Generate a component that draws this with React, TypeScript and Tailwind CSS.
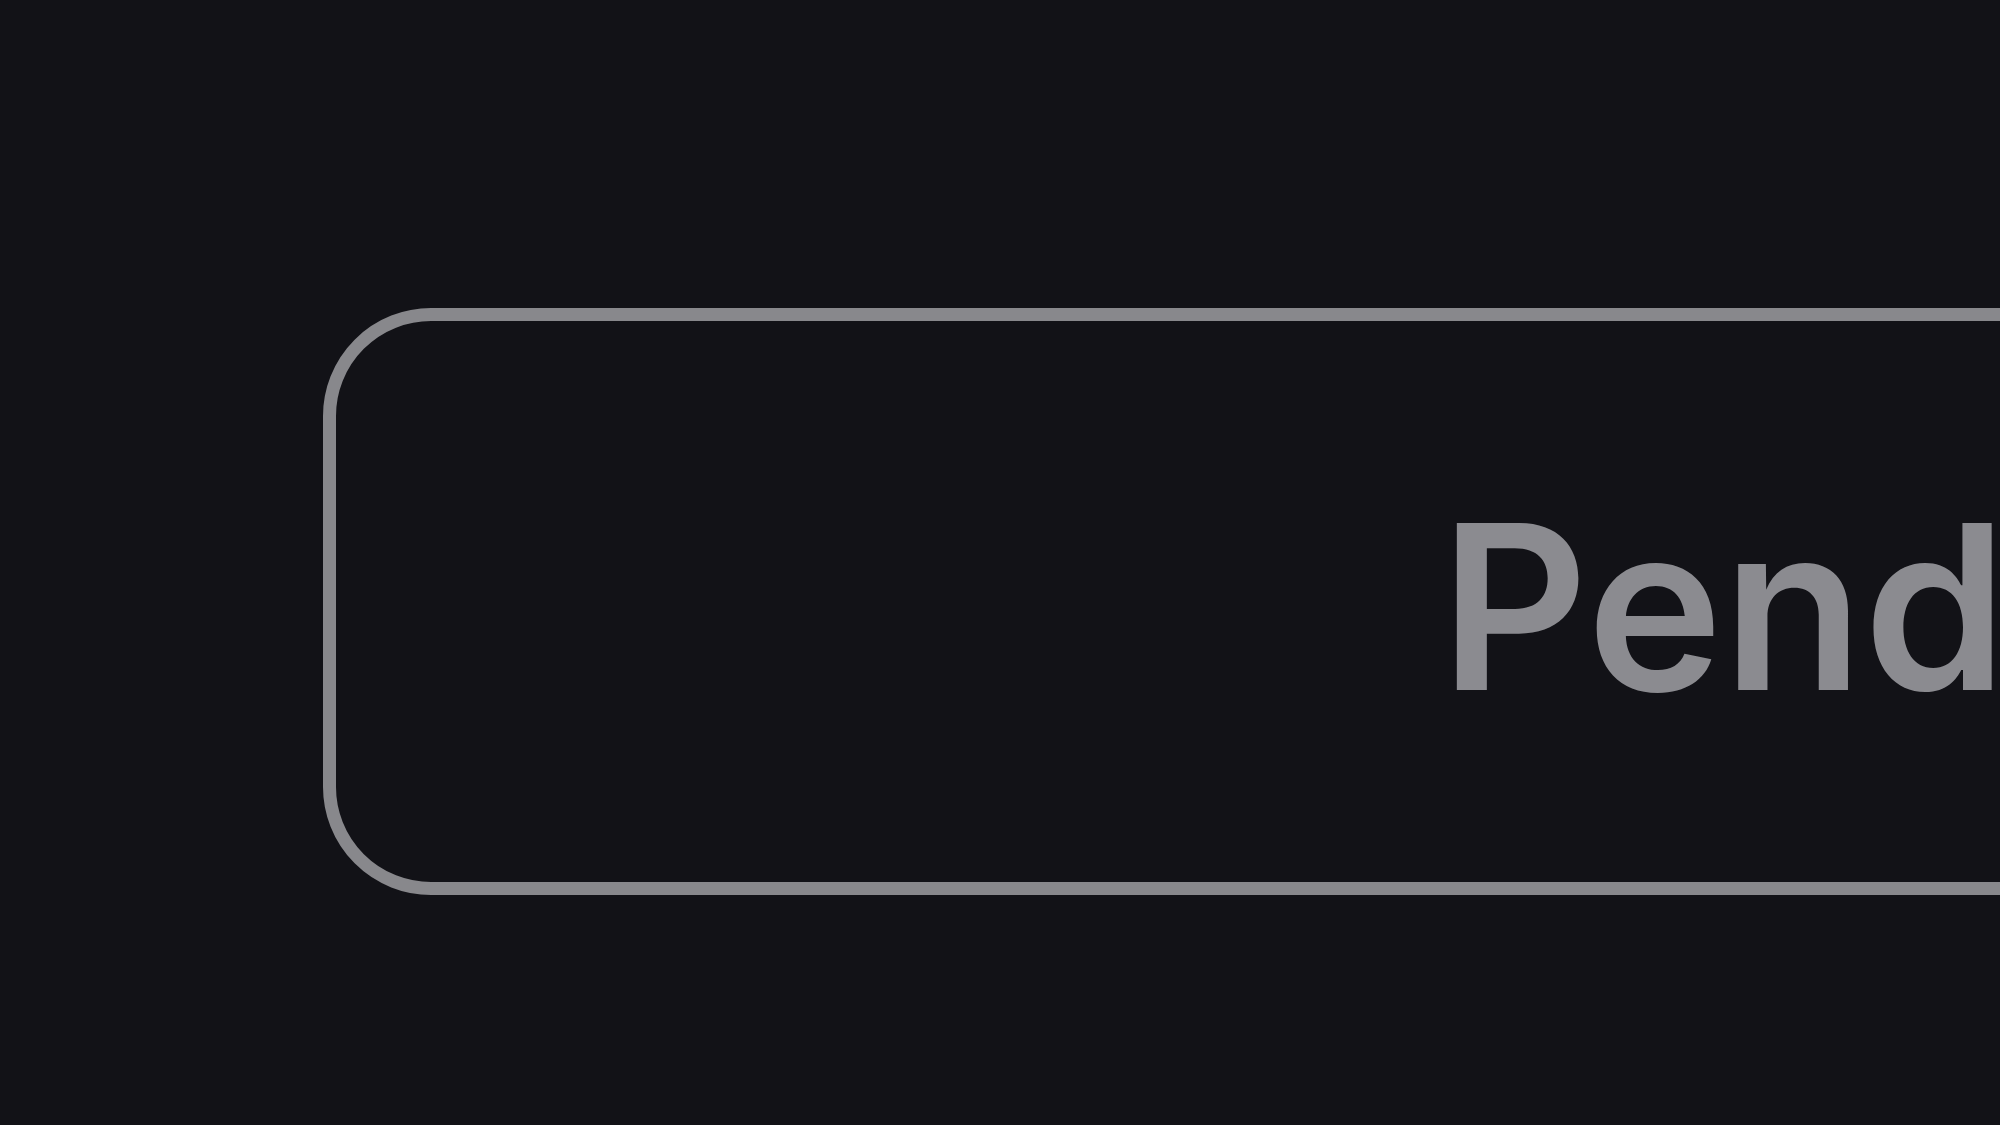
export default function App() {
    return (
        <div className="w-[2000px] h-[1125px] overflow-hidden bg-[#121217] pl-[323px] pt-[308px]">
            {/* Status pill, cropped by the right edge */}
            <div className="flex items-center w-[2400px] h-[587px] rounded-[108px] border-[13px] border-[#88888c] pl-[1104px] pt-[8px]">
                <span
                    className="text-[230px] leading-none font-semibold text-[#8b8b90] whitespace-nowrap"
                    style={{ fontFamily: "Inter, 'Noto Sans', sans-serif" }}
                >
                    Pending
                </span>
            </div>
        </div>
    );
}
